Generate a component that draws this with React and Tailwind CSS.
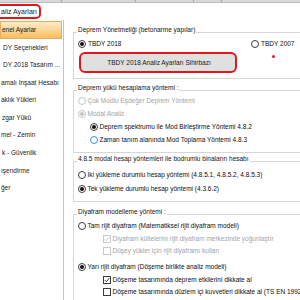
import React from "react";

function Radio({ checked, disabled, focus }) {
  const border = focus
    ? "border-[#3a8ee6]"
    : disabled
    ? "border-[#c6c6c6]"
    : "border-[#3c3c3c]";
  return (
    <span
      className={`flex h-[8px] w-[8px] shrink-0 items-center justify-center rounded-full border bg-white ${border}`}
    >
      {checked && (
        <span
          className={`h-[4px] w-[4px] rounded-full ${disabled ? "bg-[#c2c2c2]" : "bg-[#111111]"}`}
        />
      )}
    </span>
  );
}

function Check({ checked, disabled }) {
  const border = disabled ? "border-[#cacaca]" : "border-[#3c3c3c]";
  return (
    <span className={`flex h-[8px] w-[8px] shrink-0 items-center justify-center border bg-white ${border}`}>
      {checked && (
        <svg width="6" height="6" viewBox="0 0 6 6">
          <path
            d="M0.8 3.1 L2.4 4.7 L5.3 1.2"
            fill="none"
            stroke={disabled ? "#c2c2c2" : "#222"}
            strokeWidth="0.9"
          />
        </svg>
      )}
    </span>
  );
}

function Row({ children, className = "" }) {
  return <div className={`flex items-center whitespace-nowrap ${className}`}>{children}</div>;
}

function Legend({ children }) {
  return (
    <legend className="-ml-[1px] px-[1px] pb-[5px] text-[6.5px] leading-[8px] text-[#141414]">
      {children}
    </legend>
  );
}

const sideItems = [
  { t: "enel Ayarlar", pl: "pl-[1px]" },
  { t: "DY Seçenekleri", pl: "pl-[3px]" },
  { t: "DY 2018 Tasarım ...", pl: "pl-[3px]" },
  { t: "amalı İnşaat Hesabı", pl: "pl-[1px]" },
  { t: "aklık Yükleri", pl: "pl-[1px]" },
  { t: "zgar Yükü", pl: "pl-[2px]" },
  { t: "mel - Zemin", pl: "pl-[1px]" },
  { t: "k - Güvenlik", pl: "pl-[2px]" },
  { t: "ışendirme", pl: "pl-[1px]" },
  { t: "ğer", pl: "pl-[1px]" },
];

export default function App() {
  return (
    <div className="h-[300px] w-[300px] overflow-hidden bg-white font-['Liberation_Sans',Arial,sans-serif] text-[#0d0d0d]">
      {/* top strip */}
      <div className="flex h-[3px] border-b border-[#bdbdbd] bg-[#d9d9d9]">
        <span className="ml-[61px] h-full w-px bg-[#a8a8a8]" />
        <span className="ml-[73px] h-full w-px bg-[#a8a8a8]" />
        <span className="ml-[57px] h-full w-px bg-[#a8a8a8]" />
        <span className="ml-[27px] h-full w-px bg-[#a8a8a8]" />
      </div>
      {/* title */}
      <div className="flex h-[17px] items-center">
        <div className="-ml-[8px] flex h-[15px] items-center rounded-[5px] border-2 border-[#e3161b] pl-[7px] pr-[2px] text-[7px] leading-none text-[#1a1a1a]">
          aliz Ayarları
        </div>
      </div>
      {/* main */}
      <div className="flex h-[280px]">
        <div className="w-[64px] shrink-0 border-r border-[#c3c3c3] pt-[1px]">
          {sideItems.map((it, i) => (
            <div
              key={i}
              className={`flex h-[17.6px] w-[62px] items-center overflow-hidden whitespace-nowrap text-[6.5px] text-[#222222] ${it.pl} ${
                i === 0
                  ? "border border-[#e2ae62] bg-gradient-to-b from-[#fdebc8] via-[#fbd592] to-[#f8bd5c]"
                  : ""
              }`}
            >
              {it.t}
            </div>
          ))}
        </div>
        <div className="w-[250px] shrink-0 pl-[9px]">
          {/* group 1 */}
          <fieldset className="mt-[5.5px] w-[240px] border border-[#d6d6d6] pb-[5px] pl-[4px]">
            <Legend>Deprem Yönetmeliği (betonarme yapılar)</Legend>
            <Row className="h-[10px] text-[6.5px]">
              <span className="flex w-[173px] items-center gap-[2px]">
                <Radio checked />
                <span>TBDY 2018</span>
              </span>
              <span className="flex items-center gap-[2px]">
                <Radio />
                <span>TBDY 2007</span>
              </span>
            </Row>
            <div className="mt-[3.5px] flex items-start">
              <div className="ml-[1px] flex h-[21px] w-[158px] items-center justify-center rounded-[6px] border-2 border-[#e3161b] bg-[#e0e0e0] pl-[2px] text-[6.5px] text-[#1a1a1a]">
                TBDY 2018 Analiz Ayarları Sihirbazı
              </div>
              <span className="ml-[35px] mt-[3px] h-[2.5px] w-[2.5px] rounded-full bg-[#e3161b]" />
            </div>
          </fieldset>

          {/* group 2 */}
          <fieldset className="mt-[4.5px] w-[240px] border border-[#d6d6d6] pb-[5.5px] pl-[4px]">
            <Legend>Deprem yükü hesaplama yöntemi :</Legend>
            <div className="-mt-[2px] text-[6.5px]">
              <Row className="h-[13px] gap-[1.5px] text-[#a3a3a3]">
                <Radio disabled />
                <span>Çok Modlu Eşdeğer Deprem Yöntemi</span>
              </Row>
              <Row className="h-[13px] gap-[1.5px] text-[#a3a3a3]">
                <Radio disabled checked />
                <span>Modal Analiz</span>
              </Row>
              <Row className="h-[13px] gap-[1.5px] pl-[12px]">
                <Radio checked />
                <span>Deprem spektrumu ile Mod Birleştirme Yöntemi 4.8.2</span>
              </Row>
              <Row className="h-[13px] gap-[1.5px] pl-[12px]">
                <Radio focus />
                <span>Zaman tanım alanında Mod Toplama Yöntemi 4.8.3</span>
              </Row>
            </div>
          </fieldset>

          {/* group 3 */}
          <fieldset className="mt-[2px] w-[240px] border border-[#d6d6d6] pb-[5px] pl-[4px]">
            <Legend>4.8.5 modal hesap yöntemleri ile bodrumlu binaların hesabı</Legend>
            <div className="text-[6.5px]">
              <Row className="h-[14px] gap-[1.5px]">
                <Radio />
                <span>İki yükleme durumlu hesap yöntemi (4.8.5.1, 4.8.5.2, 4.8.5.3)</span>
              </Row>
              <Row className="h-[14px] gap-[1.5px]">
                <Radio checked />
                <span>Tek yükleme durumlu hesap yöntemi (4.3.6.2)</span>
              </Row>
            </div>
          </fieldset>

          {/* group 4 */}
          <fieldset className="mt-[5.5px] w-[240px] border border-[#d6d6d6] pb-[5px] pl-[4px]">
            <Legend>Diyafram modelleme yöntemi :</Legend>
            <div className="-mt-[0.5px] text-[6.5px]">
              <Row className="h-[12.5px] gap-[1.5px]">
                <Radio />
                <span>Tam rijit diyafram (Matematiksel rijit diyafram modeli)</span>
              </Row>
              <Row className="h-[12.5px] gap-[2px] pl-[24.5px] text-[#a3a3a3]">
                <Check checked disabled />
                <span>Diyafram kütlelerini rijit diyafram merkezinde yoğunlaştır</span>
              </Row>
              <Row className="h-[12.5px] gap-[2px] pl-[24.5px] text-[#a3a3a3]">
                <Check disabled />
                <span>Düşey yükler için rijit diyaframı kullan</span>
              </Row>
              <Row className="mt-[3.5px] h-[12.5px] gap-[1.5px]">
                <Radio checked />
                <span>Yarı rijit diyafram (Döşeme birlikte analiz modeli)</span>
              </Row>
              <Row className="h-[12.5px] gap-[2px] pl-[24.5px]">
                <Check checked />
                <span>Döşeme tasarımında deprem etkilerini dikkate al</span>
              </Row>
              <Row className="h-[12.5px] gap-[2px] pl-[24.5px]">
                <Check />
                <span>Döşeme tasarımında düzlem içi kuvvetleri dikkate al (TS EN 1992-1-1)</span>
              </Row>
            </div>
          </fieldset>
        </div>
      </div>
    </div>
  );
}
